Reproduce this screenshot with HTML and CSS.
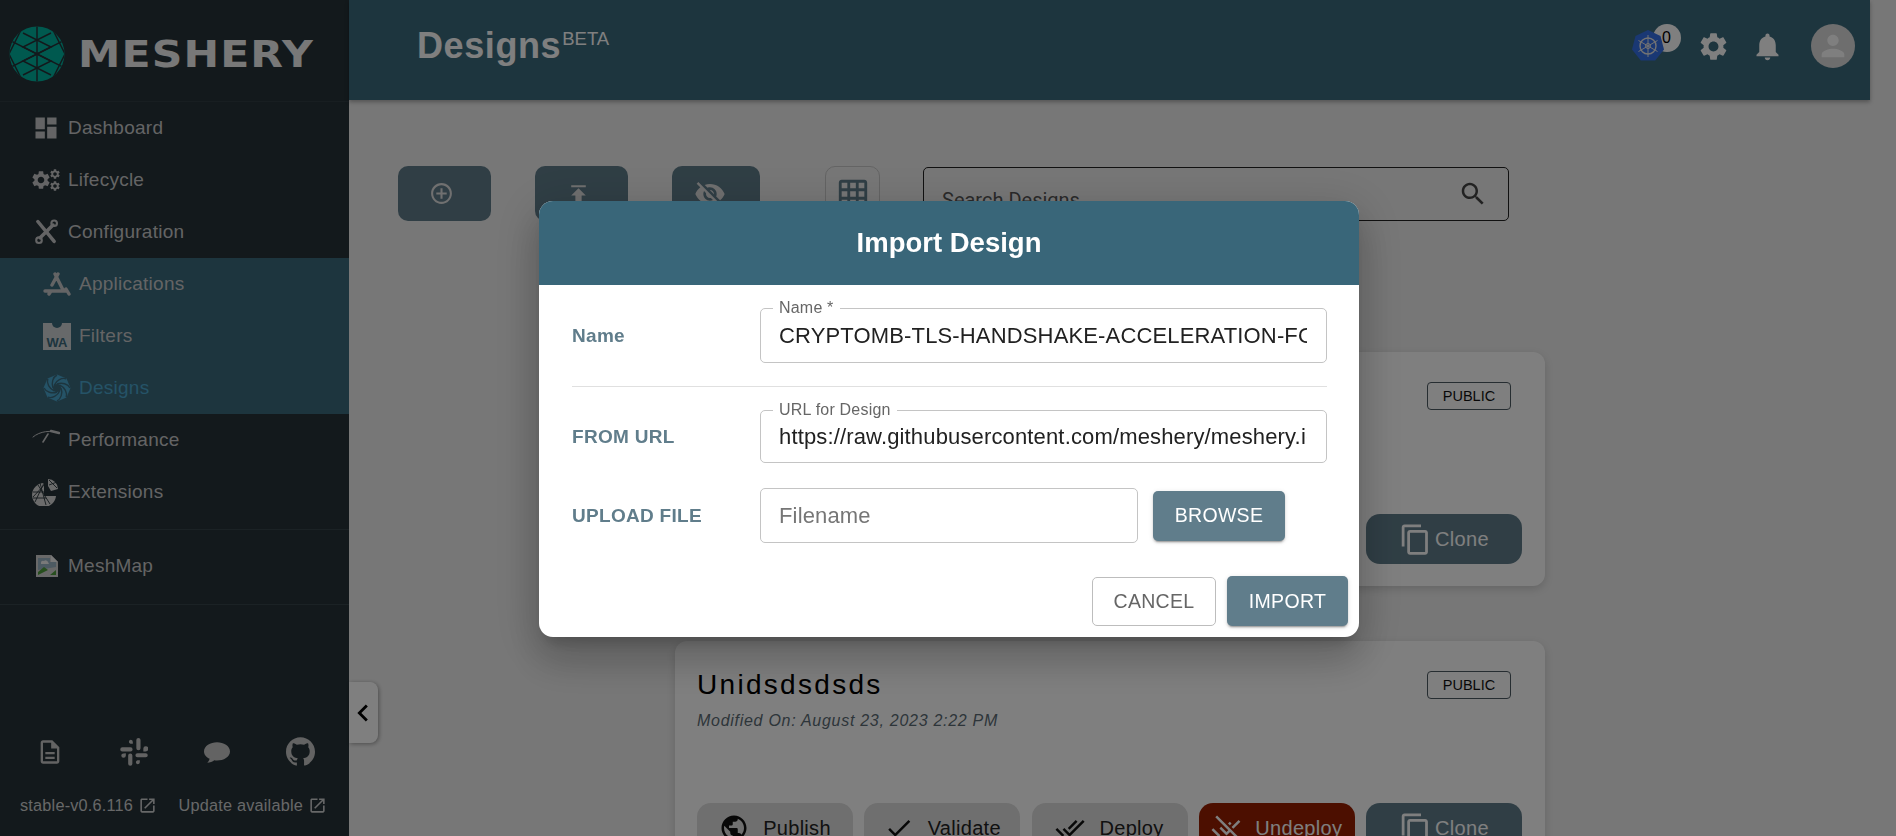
FILE: index.html
```html
<!DOCTYPE html>
<html lang="en">
<head>
<meta charset="utf-8">
<title>Designs</title>
<link rel="stylesheet" href="styles.css">
</head>
<body>
<svg class="sprite" xmlns="http://www.w3.org/2000/svg">
  <symbol id="i-gear" viewBox="0 0 24 24"><path d="M19.14 12.94c.04-.3.06-.61.06-.94 0-.32-.02-.64-.07-.94l2.03-1.58c.18-.14.23-.41.12-.61l-1.92-3.32c-.12-.22-.37-.29-.59-.22l-2.39.96c-.5-.38-1.03-.7-1.62-.94l-.36-2.54c-.04-.24-.24-.41-.48-.41h-3.84c-.24 0-.43.17-.47.41l-.36 2.54c-.59.24-1.13.57-1.62.94l-2.39-.96c-.22-.08-.47 0-.59.22L2.74 8.87c-.12.21-.08.47.12.61l2.03 1.58c-.05.3-.09.63-.09.94s.02.64.07.94l-2.03 1.58c-.18.14-.23.41-.12.61l1.92 3.32c.12.22.37.29.59.22l2.39-.96c.5.38 1.03.7 1.62.94l.36 2.54c.05.24.24.41.48.41h3.84c.24 0 .44-.17.47-.41l.36-2.54c.59-.24 1.13-.56 1.62-.94l2.39.96c.22.08.47 0 .59-.22l1.92-3.32c.12-.22.07-.47-.12-.61l-2.01-1.58zM12 15.6c-1.98 0-3.6-1.62-3.6-3.6s1.62-3.6 3.6-3.6 3.6 1.62 3.6 3.6-1.62 3.6-3.6 3.6z"/></symbol>
  <symbol id="i-ext" viewBox="0 0 24 24"><path d="M19 19H5V5h7V3H5c-1.11 0-2 .9-2 2v14c0 1.1.89 2 2 2h14c1.1 0 2-.9 2-2v-7h-2v7zM14 3v2h3.59l-9.83 9.83 1.41 1.41L19 6.41V10h2V3h-7z"/></symbol>
  <symbol id="i-public" viewBox="0 0 24 24"><path d="M12 2C6.48 2 2 6.48 2 12s4.48 10 10 10 10-4.48 10-10S17.52 2 12 2zm-1 17.93c-3.95-.49-7-3.85-7-7.93 0-.62.08-1.21.21-1.79L9 15v1c0 1.1.9 2 2 2v1.93zm6.9-2.54c-.26-.81-1-1.39-1.9-1.39h-1v-3c0-.55-.45-1-1-1H8v-2h2c.55 0 1-.45 1-1V7h2c1.1 0 2-.9 2-2v-.41c2.93 1.19 5 4.06 5 7.41 0 2.08-.8 3.97-2.1 5.39z"/></symbol>
  <symbol id="i-done" viewBox="0 0 24 24"><path d="M9 16.2L4.8 12l-1.4 1.4L9 19 21 7l-1.4-1.4L9 16.2z"/></symbol>
  <symbol id="i-doneall" viewBox="0 0 24 24"><path d="M18 7l-1.41-1.41-6.34 6.34 1.41 1.41L18 7zm4.24-1.41L11.66 16.17 7.48 12l-1.41 1.41L11.66 19l12-12-1.42-1.41zM.41 13.41L6 19l1.41-1.41L1.83 12 .41 13.41z"/></symbol>
  <symbol id="i-removedone" viewBox="0 0 24 24"><path d="M4.84 1.98 3.43 3.39l10.38 10.38-1.41 1.41-4.24-4.24-1.41 1.41 5.66 5.66 2.83-2.83 6.6 6.6 1.41-1.41L4.84 1.98zm13.02 10.61L23.5 6.94l-1.42-1.41-5.65 5.65 1.43 1.41zm-1.41-4.24-1.41-1.41-1.42 1.41 1.42 1.42 1.41-1.42zM.41 13.59 6.07 19.25l1.41-1.41L1.83 12.18.41 13.59z"/></symbol>
  <symbol id="i-copy" viewBox="0 0 24 24"><path d="M16 1H4c-1.1 0-2 .9-2 2v14h2V3h12V1zm3 4H8c-1.1 0-2 .9-2 2v14c0 1.1.9 2 2 2h11c1.1 0 2-.9 2-2V7c0-1.1-.9-2-2-2zm0 16H8V7h11v14z"/></symbol>
</svg>

<div class="app">
  <aside class="sidebar">
    <div class="brand">
      <svg class="brand-mark" viewBox="0 0 56 56">
        <defs><clipPath id="logo-clip"><circle cx="28" cy="28" r="27.5"/></clipPath></defs>
        <circle cx="28" cy="28" r="27.5" fill="#00b39f"/>
        <g clip-path="url(#logo-clip)" stroke="#263238" stroke-width="1.5" fill="none">
          <path d="M28 0V56M0 14 56 42M0 42 56 14"/>
          <path d="M14 0 0 28 14 56M42 0 56 28 42 56"/>
          <path d="M14 7 42 21 14 35 42 49M42 7 14 21 42 35 14 49"/>
        </g>
      </svg>
      <span class="brand-name">MESHERY</span>
    </div>
    <nav class="nav">
      <a class="nav-item">
        <svg class="nav-icon" viewBox="0 0 24 24"><path d="M3 13h8V3H3v10zm0 8h8v-6H3v6zm10 0h8V11h-8v10zm0-18v6h8V3h-8z"/></svg>
        <span>Dashboard</span>
      </a>
      <a class="nav-item">
        <span class="cogs">
          <svg class="cog-big"><use href="#i-gear"/></svg>
          <span class="cog-small-col">
            <svg class="cog-small"><use href="#i-gear"/></svg>
            <svg class="cog-small"><use href="#i-gear"/></svg>
          </span>
        </span>
        <span>Lifecycle</span>
      </a>
      <a class="nav-item">
        <svg class="nav-icon tools" viewBox="0 0 24 24" fill="none" stroke-linecap="round">
          <path d="M5 3 19 20"/><path d="M18 6 7 17"/><circle cx="6" cy="19" r="2.4" stroke-width="1.8"/><circle cx="19" cy="4.5" r="2.4" stroke-width="1.8"/>
        </svg>
        <span>Configuration</span>
      </a>
      <div class="subnav">
        <a class="sub-item">
          <svg class="sub-icon" viewBox="0 0 28 24" fill="none" stroke-width="3.4" stroke-linecap="round"><path d="M15 2 9 13M12 2 20 18M2 19H24M6 22 8 19M23 17 26 22"/></svg>
          <span>Applications</span>
        </a>
        <a class="sub-item">
          <span class="wa-icon"><span class="wa-notch"></span><span class="wa-text">WA</span></span>
          <span>Filters</span>
        </a>
        <a class="sub-item active">
          <svg class="sub-icon swirl" viewBox="0 0 28 28">
            <path class="swirl-fill" d="M14 .5 23.500 4.500 27.500 14 23.500 23.500 14 27.500 4.500 23.500 .5 14 4.500 4.500Z"/>
            <circle class="swirl-hole" cx="14" cy="14" r="4"/>
            <g class="swirl-cuts" fill="none" stroke-width="1.400">
              <path d="M14 10C19 8 25 10 27 14"/>
              <path transform="rotate(45 14 14)" d="M14 10C19 8 25 10 27 14"/>
              <path transform="rotate(90 14 14)" d="M14 10C19 8 25 10 27 14"/>
              <path transform="rotate(135 14 14)" d="M14 10C19 8 25 10 27 14"/>
              <path transform="rotate(180 14 14)" d="M14 10C19 8 25 10 27 14"/>
              <path transform="rotate(225 14 14)" d="M14 10C19 8 25 10 27 14"/>
              <path transform="rotate(270 14 14)" d="M14 10C19 8 25 10 27 14"/>
              <path transform="rotate(315 14 14)" d="M14 10C19 8 25 10 27 14"/>
            </g>
          </svg>
          <span>Designs</span>
        </a>
      </div>
      <a class="nav-item">
        <svg class="nav-icon gauge" viewBox="0 0 28 24" fill="none" stroke-linecap="round"><path d="M1 9C8 3 19 2 27 5" stroke-width="1" /><path d="M19 3 27 5" stroke-width="2.4"/><path d="M16 6 11 14" stroke-width="1.6"/></svg>
        <span>Performance</span>
      </a>
      <a class="nav-item">
        <svg class="nav-icon pie" viewBox="0 0 28 28">
          <path d="M12 5A12 12 0 1 0 24 18H13Q12 18 12 17Z"/>
          <path d="M16 1A10 10 0 0 1 26 11L19 13 16 8Z"/>
          <path class="mesh-lines" d="M1 14H22M6 7 18 26M12 5 3 24M1 19 14 5M1 20H14M8 5 14 27M17 2 25 10M17 7 25 4"/>
        </svg>
        <span>Extensions</span>
      </a>
    </nav>
    <div class="nav-rule"></div>
    <a class="nav-item meshmap">
      <svg class="nav-icon broken" viewBox="0 0 22 22">
        <path class="b-page" d="M0 0H15L22 7V22H0Z"/>
        <path class="b-fold" d="M15 0 22 7H15Z"/>
        <path class="b-sky" d="M2 3H14V7H20V12L2 15Z"/>
        <path class="b-cloud" d="M5 8a2 2 0 0 1 3-2 2.5 2.5 0 0 1 4 1l1 2H5Z"/>
        <path class="b-land" d="M2 20V17L8 12 12 15 2 20ZM14 20 20 15V20Z"/>
      </svg>
      <span>MeshMap</span>
    </a>
    <div class="nav-rule"></div>
    <div class="foot">
      <div class="foot-icons">
        <svg class="foot-icon" viewBox="0 0 24 24"><path d="M8 16h8v2H8zm0-4h8v2H8zm6-10H6c-1.1 0-2 .9-2 2v16c0 1.1.89 2 1.99 2H18c1.1 0 2-.9 2-2V8l-6-6zm4 18H6V4h7v5h5v11z"/></svg>
        <svg class="foot-icon" viewBox="0 0 24 24"><path d="M9 1.5a2 2 0 0 1 2 2V5H9a1.8 1.8 0 0 1 0-3.5ZM2 8h7a1.8 1.8 0 0 1 0 3.6H2A1.8 1.8 0 0 1 2 8ZM14 1.8a1.8 1.8 0 0 1 3.6 0v7a1.8 1.8 0 0 1-3.6 0ZM22 7a2 2 0 0 1 0 4.500h-2V9a2 2 0 0 1 2-2ZM22 13a1.800 1.800 0 0 1 0 3.600h-7a1.800 1.800 0 0 1 0-3.600ZM15 19h2v1.500a2 2 0 0 1-2 2 1.800 1.800 0 0 1 0-3.500ZM7 15a1.800 1.800 0 0 1 3.600 0v7a1.800 1.800 0 0 1-3.600 0ZM5 13v2a2 2 0 0 1-2 2 1.800 1.800 0 0 1 0-3.800Z"/></svg>
        <svg class="foot-icon chat" viewBox="0 0 24 24"><path d="M12 3C5.900 3 0 6.300 0 11.500c0 3 2.300 5.500 5.200 6.700-.3 1.300-1.300 2.800-2.200 3.800 2.300-.2 5-1.200 6.500-2.400.8.100 1.700.2 2.500.2 6.100 0 12-3.100 12-8.300S18.100 3 12 3Z"/></svg>
        <svg class="foot-icon github" viewBox="0 0 24 24"><path d="M12 .297c-6.630 0-12 5.373-12 12 0 5.303 3.438 9.800 8.205 11.385.600.113.820-.258.820-.577 0-.285-.010-1.040-.015-2.040-3.338.724-4.042-1.610-4.042-1.610C4.422 18.070 3.633 17.700 3.633 17.700c-1.087-.744.084-.729.084-.729 1.205.084 1.838 1.236 1.838 1.236 1.070 1.835 2.809 1.305 3.495.998.108-.776.417-1.305.760-1.605-2.665-.300-5.466-1.332-5.466-5.930 0-1.310.465-2.380 1.235-3.220-.135-.303-.540-1.523.105-3.176 0 0 1.005-.322 3.300 1.230.960-.267 1.980-.399 3-.405 1.020.006 2.040.138 3 .405 2.280-1.552 3.285-1.230 3.285-1.230.645 1.653.240 2.873.120 3.176.765.840 1.230 1.910 1.230 3.220 0 4.610-2.805 5.625-5.475 5.920.420.360.810 1.096.810 2.220 0 1.606-.015 2.896-.015 3.286 0 .315.210.690.825.570C20.565 22.092 24 17.592 24 12.297c0-6.627-5.373-12-12-12"/></svg>
      </div>
      <div class="foot-links">
        <a class="foot-link">stable-v0.6.116<svg class="ext"><use href="#i-ext"/></svg></a>
        <a class="foot-link">Update available<svg class="ext"><use href="#i-ext"/></svg></a>
      </div>
    </div>
  </aside>

  <div class="main">
    <header class="topbar">
      <h1 class="page-title">Designs<sup class="beta">BETA</sup></h1>
      <div class="top-actions">
        <span class="k8s">
          <span class="k8s-badge">0</span>
          <svg class="k8s-hex" viewBox="0 0 32 32">
            <path class="hex-fill" d="M16 0 28.500 6 32 19.500 23.200 30.500H8.800L0 19.500 3.500 6Z"/>
            <g class="hex-wheel" fill="none" stroke-width="1">
              <circle cx="16" cy="16" r="8" stroke-width="1.400"/>
              <circle cx="16" cy="16" r="2.500"/>
              <path d="M16 5V27M6.500 10.500 25.500 21.500M6.500 21.500 25.500 10.500"/>
            </g>
          </svg>
        </span>
        <svg class="top-icon"><use href="#i-gear"/></svg>
        <svg class="top-icon" viewBox="0 0 24 24"><path d="M12 22c1.100 0 2-.9 2-2h-4c0 1.100.89 2 2 2zm6-6v-5c0-3.070-1.640-5.640-4.500-6.320V4c0-.83-.67-1.500-1.500-1.500s-1.500.67-1.500 1.500v.68C7.630 5.360 6 7.920 6 11v5l-2 2v1h16v-1l-2-2z"/></svg>
        <span class="avatar"><svg viewBox="0 0 24 24"><path d="M12 12c2.210 0 4-1.790 4-4s-1.790-4-4-4-4 1.790-4 4 1.790 4 4 4zm0 2c-2.670 0-8 1.340-8 4v2h16v-2c0-2.660-5.330-4-8-4z"/></svg></span>
      </div>
    </header>

    <section class="content">
      <div class="toolbar">
        <button class="tool-btn add"><svg viewBox="0 0 24 24"><path d="M13 7h-2v4H7v2h4v4h2v-4h4v-2h-4V7zm-1-5C6.480 2 2 6.480 2 12s4.480 10 10 10 10-4.480 10-10S17.520 2 12 2zm0 18c-4.410 0-8-3.590-8-8s3.590-8 8-8 8 3.590 8 8-3.590 8-8 8z"/></svg></button>
        <button class="tool-btn add"><svg viewBox="0 0 24 24"><path d="M5 4v2h14V4H5zm0 10h4v6h6v-6h4l-7-7-7 7z"/></svg></button>
        <button class="tool-btn eye"><svg viewBox="0 0 24 24"><path d="M12 7c2.760 0 5 2.240 5 5 0 .65-.13 1.260-.36 1.830l2.920 2.920c1.510-1.260 2.700-2.890 3.430-4.750-1.730-4.390-6-7.500-11-7.500-1.400 0-2.740.25-3.980.7l2.160 2.160C10.740 7.130 11.350 7 12 7zM2 4.270l2.280 2.280.46.46C3.080 8.300 1.780 10.020 1 12c1.730 4.390 6 7.500 11 7.500 1.550 0 3.030-.3 4.380-.84l.42.42L19.730 22 21 20.730 3.270 3 2 4.270zM7.530 9.800l1.550 1.550c-.05.21-.08.43-.08.65 0 1.660 1.340 3 3 3 .22 0 .44-.03.65-.08l1.550 1.550c-.67.33-1.410.53-2.200.53-2.760 0-5-2.240-5-5 0-.79.2-1.530.53-2.200zm4.310-.78l3.150 3.150.02-.16c0-1.660-1.340-3-3-3l-.17.01z"/></svg></button>
        <button class="view-toggle"><svg viewBox="0 0 24 24"><path d="M20 2H4c-1.100 0-2 .9-2 2v16c0 1.100.9 2 2 2h16c1.100 0 2-.9 2-2V4c0-1.100-.9-2-2-2zM8 20H4v-4h4v4zm0-6H4v-4h4v4zm0-6H4V4h4v4zm6 12h-4v-4h4v4zm0-6h-4v-4h4v4zm0-6h-4V4h4v4zm6 12h-4v-4h4v4zm0-6h-4v-4h4v4zm0-6h-4V4h4v4z"/></svg></button>
        <div class="search">
          <span class="search-text">Search Designs</span>
          <svg viewBox="0 0 24 24"><path d="M15.500 14h-.79l-.28-.27C15.410 12.590 16 11.110 16 9.500 16 5.910 13.090 3 9.500 3S3 5.910 3 9.500 5.910 16 9.500 16c1.610 0 3.090-.59 4.230-1.570l.27.28v.79l5 4.990L20.490 19l-4.990-5zm-6 0C7.010 14 5 11.990 5 9.500S7.010 5 9.500 5 14 7.010 14 9.500 11.990 14 9.500 14z"/></svg>
        </div>
      </div>

      <div class="cards">
        <article class="card">
          <div class="card-top">
            <div>
              <h2 class="card-title">CRYPTOMB-TLS</h2>
              <p class="card-date">Modified On: August 23, 2023 2:22 PM</p>
            </div>
            <span class="chip">PUBLIC</span>
          </div>
          <div class="card-actions">
            <button class="act"><svg><use href="#i-public"/></svg>Publish</button>
            <button class="act"><svg><use href="#i-done"/></svg>Validate</button>
            <button class="act"><svg><use href="#i-doneall"/></svg>Deploy</button>
            <button class="act danger"><svg><use href="#i-removedone"/></svg>Undeploy</button>
            <button class="act clone"><svg><use href="#i-copy"/></svg>Clone</button>
          </div>
        </article>
        <article class="card">
          <div class="card-top">
            <div>
              <h2 class="card-title">Unidsdsdsds</h2>
              <p class="card-date">Modified On: August 23, 2023 2:22 PM</p>
            </div>
            <span class="chip">PUBLIC</span>
          </div>
          <div class="card-actions">
            <button class="act"><svg><use href="#i-public"/></svg>Publish</button>
            <button class="act"><svg><use href="#i-done"/></svg>Validate</button>
            <button class="act"><svg><use href="#i-doneall"/></svg>Deploy</button>
            <button class="act danger"><svg><use href="#i-removedone"/></svg>Undeploy</button>
            <button class="act clone"><svg><use href="#i-copy"/></svg>Clone</button>
          </div>
        </article>
      </div>
    </section>
  </div>
</div>

<button class="collapse"><svg viewBox="0 0 24 24"><path d="M15.410 7.410 14 6l-6 6 6 6 1.410-1.410L10.830 12z"/></svg></button>

<div class="backdrop">
  <div class="dialog" role="dialog">
    <div class="dialog-head">Import Design</div>
    <div class="dialog-body">
      <div class="row row-name">
        <span class="row-label">Name</span>
        <div class="field">
          <span class="float-label">Name *</span>
          <input class="input" value="CRYPTOMB-TLS-HANDSHAKE-ACCELERATION-FOR-ISTIO">
        </div>
      </div>
      <div class="dialog-rule"></div>
      <div class="row row-url">
        <span class="row-label">FROM URL</span>
        <div class="field">
          <span class="float-label">URL for Design</span>
          <input class="input" value="https://raw.githubusercontent.com/meshery/meshery.io/master/catalog/design.yaml">
        </div>
      </div>
      <div class="row row-file">
        <span class="row-label">UPLOAD FILE</span>
        <div class="file-controls">
          <input class="input file-input" placeholder="Filename">
          <button class="btn primary browse">BROWSE</button>
        </div>
      </div>
    </div>
    <div class="dialog-actions">
      <button class="btn cancel">CANCEL</button>
      <button class="btn primary import">IMPORT</button>
    </div>
  </div>
</div>
</body>
</html>
```

FILE: styles.css
```css
* { box-sizing: border-box; }
html, body { margin: 0; height: 100%; overflow: hidden; }
body { background: #eeeeee; font-family: "Liberation Sans", Arial, sans-serif; color: #000; }
button { font-family: inherit; cursor: pointer; }
svg { display: block; }
.sprite { display: none; }

.app { display: flex; height: 836px; }

/* sidebar */
.sidebar { width: 349px; flex: none; height: 836px; background: #263238; display: flex; flex-direction: column; color: #c8c9ca; }
.brand { height: 102px; flex: none; display: flex; align-items: center; padding: 6px 0 0 9px; gap: 13px; border-bottom: 1px solid #303c43; }
.brand-mark { width: 56px; height: 56px; flex: none; }
.brand-name { font-family: "DejaVu Sans", sans-serif; font-weight: 700; font-size: 38px; letter-spacing: 1px; color: #f0f0f0; line-height: 1; transform: scaleX(1.12); transform-origin: left center; }
.nav { display: flex; flex-direction: column; }
.nav-item { display: flex; align-items: center; height: 52px; padding-left: 32px; gap: 8px; font-size: 19px; letter-spacing: .25px; }
.nav-icon { width: 28px; height: 28px; fill: #c8c9ca; flex: none; }
.nav-icon.tools { stroke: #c8c9ca; stroke-width: 3; fill: none; }
.nav-icon.gauge { stroke: #c8c9ca; fill: none; }
.nav-icon.pie { fill: #d6d6d6; }
.mesh-lines { stroke: #263238; stroke-width: .9; fill: none; }
.cogs { display: flex; align-items: center; width: 28px; flex: none; }
.cog-big { width: 22px; height: 22px; fill: #c8c9ca; flex: none; margin-left: -2px; }
.cog-small-col { display: flex; flex-direction: column; gap: 0; margin-left: -3px; }
.cog-small { width: 12px; height: 12px; fill: #c8c9ca; }
.subnav { display: flex; flex-direction: column; height: 156px; background: #3b6a7d; }
.sub-item { display: flex; align-items: center; height: 52px; padding-left: 43px; gap: 8px; font-size: 19px; letter-spacing: .25px; }
.sub-icon { width: 28px; height: 28px; stroke: #c8c9ca; flex: none; }
.wa-icon { width: 28px; height: 27px; background: #cfd2d4; position: relative; display: flex; align-items: flex-end; justify-content: center; flex: none; letter-spacing: 0; }
.wa-notch { position: absolute; top: 0; left: 9px; width: 10px; height: 5px; background: #3b6a7d; border-radius: 0 0 5px 5px; }
.wa-text { font-size: 13px; font-weight: 700; color: #3b6a7d; line-height: 15px; }
.sub-item.active { color: #4aa6cf; }
.sub-icon.swirl { stroke: none; }
.swirl-fill { fill: #4aa6cf; }
.swirl-hole { fill: #3b6a7d; }
.swirl-cuts { stroke: #3b6a7d; }
.nav-rule { height: 1px; flex: none; background: #37444b; margin-top: 11px; }
.meshmap { margin-top: 10px; }
.meshmap + .nav-rule { margin-top: 12px; }
.nav-icon.broken { width: 22px; height: 22px; margin: 0 2px 0 4px; }
.b-page { fill: #d2d2d2; }
.b-fold { fill: #f0f0f0; }
.b-sky { fill: #9ab4c4; }
.b-cloud { fill: #f2f2f2; }
.b-land { fill: #4f9d3c; }
.foot { margin-top: auto; display: flex; flex-direction: column; padding-bottom: 21px; }
.foot-icons { display: flex; justify-content: space-between; align-items: center; padding: 0 34px 0 36px; margin-bottom: 30px; }
.foot-icon { width: 28px; height: 28px; fill: #c6c6c6; }
.foot-icon.chat { width: 26px; height: 26px; }
.foot-icon.github { width: 29px; height: 29px; }
.foot-links { display: flex; justify-content: space-between; padding: 0 22px 0 20px; }
.foot-link { display: flex; align-items: center; gap: 5px; font-size: 16.300px; letter-spacing: .2px; color: #cfd0d1; }
.ext { width: 19px; height: 19px; fill: #cfd0d1; }

/* main */
.main { flex: 1; min-width: 0; }
.topbar { height: 100px; width: 1521px; background: #3b6a7d; display: flex; align-items: center; padding: 0 15px 8px 68px; box-shadow: 0 2px 4px rgba(0,0,0,.3); }
.page-title { margin: 0; font-size: 36px; font-weight: 700; letter-spacing: .6px; color: #fff; line-height: 1; }
.beta { font-size: 18.500px; font-weight: 400; letter-spacing: 0; vertical-align: super; line-height: 0; margin-left: 1px; }
.top-actions { margin-left: auto; display: flex; align-items: center; gap: 21px; }
.k8s { display: flex; width: 44px; height: 44px; position: relative; align-items: center; }
.k8s-hex { width: 32px; height: 32px; position: relative; }
.hex-fill { fill: #3570e8; }
.hex-wheel { stroke: #e6e6e6; }
.k8s-badge { position: absolute; left: 21px; top: 0; width: 28px; height: 28px; border-radius: 50%; background: #fff; display: flex; align-items: center; justify-content: center; font-size: 16px; color: #000; }
.top-icon { width: 33px; height: 33px; fill: #fff; }
.avatar { width: 44px; height: 44px; border-radius: 50%; background: #dcdcdc; display: flex; align-items: center; justify-content: center; margin-left: 6.500px; }
.avatar svg { width: 34px; height: 34px; fill: #fff; }

.content { padding: 66px 0 0 49px; }
.toolbar { display: flex; align-items: flex-end; height: 55px; }
.tool-btn { width: 93px; height: 55px; border: 0; border-radius: 10px; background: #607d8b; display: flex; align-items: center; justify-content: center; margin-right: 44px; padding: 0 7px 0 0; }
.tool-btn svg { width: 25px; height: 25px; fill: #e0e0e0; }
.tool-btn.eye { width: 88px; margin-right: 65px; padding-right: 13px; }
.tool-btn.eye svg { width: 32px; height: 32px; }
.view-toggle { width: 55px; height: 55px; border: 1px solid #c8c8c8; border-radius: 10px; background: transparent; padding: 0; display: flex; align-items: center; justify-content: center; margin-right: 43px; }
.view-toggle svg { width: 34px; height: 34px; fill: #607d8b; }
.search { width: 586px; height: 54px; border: 1px solid #222; border-radius: 5px; display: flex; align-items: center; justify-content: space-between; padding: 0 20px 0 18px; }
.search-text { font-family: Roboto, sans-serif; font-size: 20px; color: #555; position: relative; top: 6px; }
.search svg { width: 30px; height: 30px; fill: #444; }

.cards { margin: 131px 0 0 277px; display: flex; flex-direction: column; gap: 55px; width: 870px; }
.card { height: 234px; flex: none; background: #fff; border-radius: 12px; padding: 30px 22px 22px 22px; display: flex; flex-direction: column; justify-content: space-between; box-shadow: 0 3px 8px rgba(0,0,0,.15); }
.card-top { display: flex; justify-content: space-between; align-items: flex-start; padding-right: 12px; }
.card-title { margin: 0; padding-top: 1px; font-weight: 400; font-size: 28px; letter-spacing: 2.300px; line-height: 26px; color: #000; }
.card-date { margin: 13px 0 0; font-style: italic; font-size: 16px; letter-spacing: .72px; line-height: 20px; color: #5b6b74; }
.chip { width: 84px; height: 28px; border: 1px solid #4c5a62; border-radius: 4px; display: flex; align-items: center; justify-content: center; font-size: 14.500px; color: #111; }
.card-actions { display: flex; gap: 11.250px; }
.act { width: 156px; height: 50px; border: 0; border-radius: 14px; background: #dedede; display: flex; align-items: center; justify-content: center; gap: 14px; font-size: 20px; letter-spacing: .3px; color: #222; padding: 0; }
.act svg { width: 30px; height: 30px; fill: #111; flex: none; }
.act.danger { background: #991f00; color: #fff; }
.act.danger svg { fill: #fff; }
.act.clone { background: #607d8b; color: #fff; gap: 3px; }
.act.clone svg { width: 33px; height: 33px; fill: #fff; }

.collapse { position: fixed; left: 349px; top: 682px; width: 29px; height: 61px; background: #fff; border: 0; border-radius: 0 8px 8px 0; padding: 0; box-shadow: 1px 1px 4px rgba(0,0,0,.35); display: flex; align-items: center; justify-content: center; }
.collapse svg { width: 34px; height: 34px; fill: #000; flex: none; margin-left: -2px; }

/* dialog */
.backdrop { position: fixed; inset: 0; background: rgba(0,0,0,.5); display: flex; align-items: center; justify-content: center; }
.dialog { width: 820px; height: 436px; background: #fff; border-radius: 14px; overflow: hidden; margin: 2px 0 0 2px; box-shadow: 0 11px 15px -7px rgba(0,0,0,.2), 0 24px 38px 3px rgba(0,0,0,.14), 0 9px 46px 8px rgba(0,0,0,.12); display: flex; flex-direction: column; }
.dialog-head { height: 84px; flex: none; background: #396679; color: #fff; display: flex; align-items: center; justify-content: center; font-weight: 700; font-size: 27.500px; }
.dialog-body { padding: 23px 32px 0 33px; }
.row { display: grid; grid-template-columns: 188px 1fr; align-items: center; }
.row-label { font-size: 19px; font-weight: 700; letter-spacing: .3px; color: #607d8b; }
.field { position: relative; }
.float-label { position: absolute; left: 13px; top: -8px; padding: 0 6px; background: #fff; font-size: 16px; line-height: 16px; letter-spacing: .2px; color: #666; }
.input { display: block; width: 100%; height: 55px; border: 1px solid #c4c4c4; border-radius: 5px; padding: 0 19px 0 18px; font-family: "Liberation Sans", sans-serif; font-size: 22px; letter-spacing: .15px; color: #212121; background: #fff; outline: 0; }
.input::placeholder { color: #767676; opacity: 1; }
.row-url .input { height: 53px; }
.dialog-rule { height: 1px; background: #e0e0e0; margin: 23px 0; }
.row-file { margin-top: 25px; }
.file-controls { display: flex; align-items: center; gap: 15px; }
.file-input { width: 378px; flex: none; }
.btn { border-radius: 5px; font-size: 19.500px; letter-spacing: .3px; padding: 0; }
.btn.primary { border: 0; background: #607d8b; color: #fff; box-shadow: 0 3px 1px -2px rgba(0,0,0,.2), 0 2px 2px 0 rgba(0,0,0,.14), 0 1px 5px 0 rgba(0,0,0,.12); }
.browse { width: 132px; height: 50px; }
.dialog-actions { margin-top: auto; display: flex; justify-content: flex-end; align-items: flex-end; gap: 11px; padding: 0 11px 11px; }
.cancel { width: 124px; height: 49px; border: 1px solid #bdbdbd; background: #fff; color: #666; }
.import { width: 121px; height: 50px; }
```
